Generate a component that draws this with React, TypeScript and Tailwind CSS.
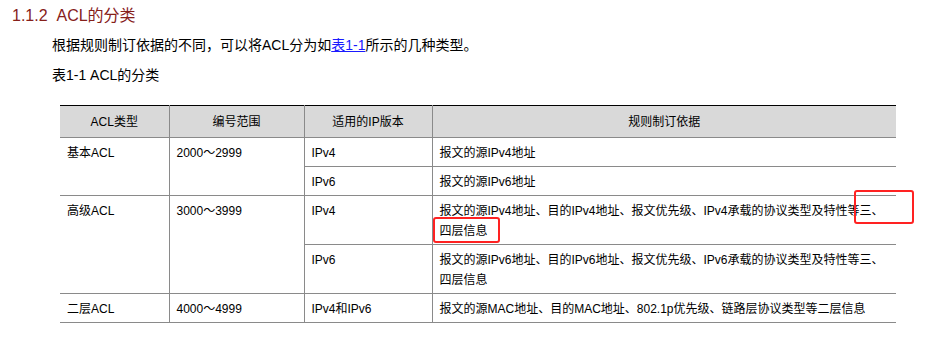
const rows = [
  { type: "基本ACL", range: "2000～2999", span: 2, ip: "IPv4", rule: ["报文的源IPv4地址"] },
  { ip: "IPv6", rule: ["报文的源IPv6地址"] },
  {
    type: "高级ACL",
    range: "3000～3999",
    span: 2,
    ip: "IPv4",
    rule: ["报文的源IPv4地址、目的IPv4地址、报文优先级、IPv4承载的协议类型及特性等三、", "四层信息"],
  },
  {
    ip: "IPv6",
    rule: ["报文的源IPv6地址、目的IPv6地址、报文优先级、IPv6承载的协议类型及特性等三、", "四层信息"],
  },
  {
    type: "二层ACL",
    range: "4000～4999",
    span: 1,
    ip: "IPv4和IPv6",
    rule: ["报文的源MAC地址、目的MAC地址、802.1p优先级、链路层协议类型等二层信息"],
  },
];

const cell = "align-top pl-[7px] pr-[7px] pt-[5px] pb-[3px] leading-[20px] border-b border-[#8a8a8a]";

export default function App() {
  return (
    <div
      className="relative w-[939px] h-[346px] bg-white text-black overflow-hidden"
      style={{ fontFamily: '"Liberation Sans", "Noto Sans CJK SC", sans-serif' }}
    >
      <h3 className="pt-[4px] pl-[12px] text-[16px] leading-[24px] text-[#86201a] font-normal">
        1.1.2&nbsp;&nbsp;ACL的分类
      </h3>
      <p className="mt-[7px] pl-[52px] text-[14px] leading-[20px]">
        根据规则制订依据的不同，可以将ACL分为如
        <span className="text-[#1a1aff] underline">表1-1</span>
        所示的几种类型。
      </p>
      <p className="mt-[10px] pl-[52px] text-[14px] leading-[20px]">表1-1 ACL的分类</p>

      <table className="mt-[20px] ml-[60px] w-[836px] border-collapse text-[12px] table-fixed">
        <colgroup>
          <col className="w-[109px]" />
          <col className="w-[135px]" />
          <col className="w-[128px]" />
          <col className="w-[464px]" />
        </colgroup>
        <thead>
          <tr className="bg-[#d9d9d9] border-t border-black">
            {["ACL类型", "编号范围", "适用的IP版本", "规则制订依据"].map((h, i) => (
              <th
                key={h}
                className={`h-[32px] font-normal text-center leading-[20px] border-b border-[#8a8a8a] ${
                  i < 3 ? "border-r" : ""
                }`}
              >
                {h}
              </th>
            ))}
          </tr>
        </thead>
        <tbody>
          {rows.map((r, i) => (
            <tr key={i} className={i === rows.length - 1 ? "border-b border-black" : ""}>
              {r.type && (
                <>
                  <td rowSpan={r.span} className={`${cell} border-r`}>
                    {r.type}
                  </td>
                  <td rowSpan={r.span} className={`${cell} border-r`}>
                    {r.range}
                  </td>
                </>
              )}
              <td className={`${cell} border-r`}>{r.ip}</td>
              <td className={cell}>
                {r.rule.map((line, j) => (
                  <div key={j}>{line}</div>
                ))}
              </td>
            </tr>
          ))}
        </tbody>
      </table>

      {/* red highlight boxes drawn over the table */}
      <div className="absolute left-[854px] top-[190px] w-[60px] h-[34px] border-2 border-[#ff2222] rounded-[3px]" />
      <div className="absolute left-[433px] top-[217px] w-[67px] h-[26px] border-2 border-[#ff2222] rounded-[3px]" />
    </div>
  );
}
